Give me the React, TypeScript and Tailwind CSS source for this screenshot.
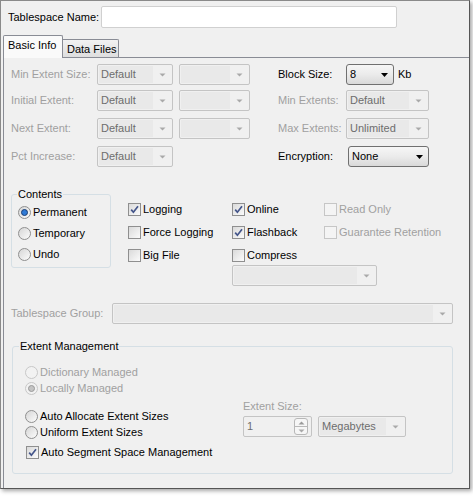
import React from "react";

const dim = "text-[#a0a0a0]";

function Tri({ dark }: { dark?: boolean }) {
  return dark ? (
    <svg width="7" height="4" viewBox="0 0 7 4" className="shrink-0">
      <path d="M0 0H7L3.5 4Z" fill="#000" />
    </svg>
  ) : (
    <svg width="7" height="4" viewBox="0 0 7 4" className="shrink-0">
      <path d="M0.5 0.5H6.5L3.5 3.5Z" fill="#a9a9a9" />
    </svg>
  );
}

function DCombo({ w, text, className = "" }: { w: string; text?: string; className?: string }) {
  return (
    <div className={`${w} ${className} h-[21px] shrink-0 flex items-center border border-[#c4c4c4] rounded-[2px] pl-[1px]`}>
      <div className="flex-1 h-[17px] flex items-center bg-[#e9e9e9] pl-[2px] text-[#6d6d6d]">{text}</div>
      <div className="w-[19px] flex justify-center">
        <Tri />
      </div>
    </div>
  );
}

function ECombo({ w, text, className = "" }: { w: string; text: string; className?: string }) {
  return (
    <div
      className={`${w} ${className} h-[21px] shrink-0 flex items-center justify-between border border-[#707070] rounded-[3px] bg-gradient-to-b from-[#f6f6f6] via-[#ebebeb] to-[#d9d9d9] pl-[3px] pr-[5px]`}
    >
      <span>{text}</span>
      <Tri dark />
    </div>
  );
}

function Check({ checked, disabled }: { checked?: boolean; disabled?: boolean }) {
  return (
    <span
      className={`w-[13px] h-[13px] shrink-0 flex items-center justify-center border ${
        disabled ? "border-[#c6c6c6] bg-[#f4f4f4]" : "border-[#8f8f8f] bg-gradient-to-br from-[#dadada] to-[#fbfbfb]"
      }`}
    >
      {checked && (
        <svg width="9" height="9" viewBox="0 0 9 9">
          <path d="M1.2 4.6L3.4 7.2L8 1.2" stroke="#44558a" strokeWidth="1.7" fill="none" />
        </svg>
      )}
    </span>
  );
}

function Radio({ checked, disabled }: { checked?: boolean; disabled?: boolean }) {
  return (
    <span
      className={`w-[13px] h-[13px] shrink-0 rounded-full flex items-center justify-center border ${
        disabled ? "border-[#c8c8c8] bg-[#f2f2f2]" : "border-[#8f8f8f] bg-gradient-to-br from-[#d6d6d6] to-[#fcfcfc]"
      }`}
    >
      {checked && (
        <span
          className={`w-[7px] h-[7px] rounded-full border ${
            disabled ? "border-[#9a9a9a] bg-[#c4c4c4]" : "border-[#1c3e73] bg-[#2f7ad6]"
          }`}
        />
      )}
    </span>
  );
}

function CheckRow({ label, checked, disabled }: { label: string; checked?: boolean; disabled?: boolean }) {
  return (
    <div className="flex items-center h-[16px] gap-[2px]">
      <Check checked={checked} disabled={disabled} />
      <span className={disabled ? dim : ""}>{label}</span>
    </div>
  );
}

function RadioRow({ label, checked, disabled }: { label: string; checked?: boolean; disabled?: boolean }) {
  return (
    <div className="flex items-center h-[16px] gap-[2px]">
      <Radio checked={checked} disabled={disabled} />
      <span className={disabled ? dim : ""}>{label}</span>
    </div>
  );
}

export default function App() {
  return (
    <div className="w-[473px] h-[499px] bg-white font-['Liberation_Sans',Arial,sans-serif] text-[11px] leading-[13px] text-black">
      <div className="w-[470px] h-[489px] flex flex-col bg-[#f0f0f0] border border-[#8a8a8a] border-r-[#555] border-b-[#555] shadow-[2px_2px_4px_rgba(0,0,0,0.35)]">
        {/* name */}
        <div className="flex items-center pl-[7px] pt-[5px]">
          <span className="w-[93px]">Tablespace Name:</span>
          <div className="w-[296px] h-[22px] bg-white border border-[#d0d0d0] rounded-[2px]" />
        </div>

        {/* tabs */}
        <div className="flex items-end pl-[2px] mt-[7px]">
          <div className="relative z-10 -mb-px w-[60px] h-[23px] pl-[4px] pt-[3px] bg-[#fafafa] border border-b-0 border-[#898c95] rounded-t-[2px]">
            Basic Info
          </div>
          <div className="w-[56px] h-[18px] pl-[4px] pt-[3px] bg-gradient-to-b from-[#f2f2f2] to-[#dedede] border border-l-0 border-b-0 border-[#898c95] rounded-tr-[2px]">
            Data Files
          </div>
        </div>

        {/* panel */}
        <div className="flex-1 ml-[2px] pl-[7px] pt-[6px] border-t border-l border-[#898c95]">
          <div className="flex items-center h-[21px]">
            <span className={`w-[86px] ${dim}`}>Min Extent Size:</span>
            <DCombo w="w-[76px]" text="Default" />
            <DCombo w="w-[71px]" className="ml-[6px]" />
            <span className="ml-[28px] w-[68px]">Block Size:</span>
            <ECombo w="w-[48px]" text="8" />
            <span className="ml-[4px]">Kb</span>
          </div>
          <div className="flex items-center h-[21px] mt-[5px]">
            <span className={`w-[86px] ${dim}`}>Initial Extent:</span>
            <DCombo w="w-[76px]" text="Default" />
            <DCombo w="w-[71px]" className="ml-[6px]" />
            <span className={`ml-[28px] w-[68px] ${dim}`}>Min Extents:</span>
            <DCombo w="w-[83px]" text="Default" />
          </div>
          <div className="flex items-center h-[21px] mt-[7px]">
            <span className={`w-[86px] ${dim}`}>Next Extent:</span>
            <DCombo w="w-[76px]" text="Default" />
            <DCombo w="w-[71px]" className="ml-[6px]" />
            <span className={`ml-[28px] w-[68px] ${dim}`}>Max Extents:</span>
            <DCombo w="w-[83px]" text="Unlimited" />
          </div>
          <div className="flex items-center h-[21px] mt-[7px]">
            <span className={`w-[86px] ${dim}`}>Pct Increase:</span>
            <DCombo w="w-[76px]" text="Default" />
            <span className="ml-[105px] w-[70px]">Encryption:</span>
            <ECombo w="w-[81px]" text="None" />
          </div>

          {/* contents + flags */}
          <div className="flex items-start mt-[21px]">
            <fieldset className="w-[100px] border border-[#d5dfe5] rounded-[3px] pl-[5px] pb-[5px]">
              <legend className="px-[1px] leading-[13px]">Contents</legend>
              <div className="flex flex-col gap-[5px] mt-[3px] ml-[1px]">
                <RadioRow label="Permanent" checked />
                <RadioRow label="Temporary" />
                <RadioRow label="Undo" />
              </div>
            </fieldset>
            <div className="ml-[17px] mt-[13px] grid grid-cols-[104px_92px_auto] gap-y-[7px]">
              <CheckRow label="Logging" checked />
              <CheckRow label="Online" checked />
              <CheckRow label="Read Only" disabled />
              <CheckRow label="Force Logging" />
              <CheckRow label="Flashback" checked />
              <CheckRow label="Guarantee Retention" disabled />
              <CheckRow label="Big File" />
              <CheckRow label="Compress" />
              <div />
              <DCombo w="w-[145px]" className="col-start-2 col-span-2 -mt-[5px]" />
            </div>
          </div>

          {/* group */}
          <div className="flex items-center h-[21px] mt-[17px]">
            <span className={`w-[101px] ${dim}`}>Tablespace Group:</span>
            <DCombo w="w-[341px]" />
          </div>

          {/* extent management */}
          <fieldset className="w-[441px] ml-[1px] mt-[16px] border border-[#d5dfe5] rounded-[3px] pl-[6px] pb-[13px]">
            <legend className="px-[1px] leading-[13px]">Extent Management</legend>
            <div className="flex ml-[6px]">
              <div className="w-[217px] mt-[11px] flex flex-col">
                <RadioRow label="Dictionary Managed" disabled />
                <RadioRow label="Locally Managed" checked disabled />
                <div className="mt-[12px]">
                  <RadioRow label="Auto Allocate Extent Sizes" />
                </div>
                <RadioRow label="Uniform Extent Sizes" />
                <div className="mt-[4px] ml-[1px]">
                  <CheckRow label="Auto Segment Space Management" checked />
                </div>
              </div>
              <div className="mt-[47px]">
                <div className={`pl-[1px] ${dim}`}>Extent Size:</div>
                <div className="flex mt-[3px] ml-[1px]">
                  <div className="w-[69px] h-[21px] flex items-center justify-between border border-[#c4c4c4] rounded-[2px] pl-[3px] pr-[3px] text-[#6d6d6d]">
                    <span>1</span>
                    <div className="w-[14px] h-[17px] flex flex-col border border-[#b8b8b8] rounded-[3px] bg-[#f6f6f6]">
                      <div className="flex-1 flex items-center justify-center border-b border-[#b8b8b8]">
                        <svg width="7" height="4" viewBox="0 0 7 4">
                          <path d="M0.5 3.5H6.5L3.5 0.5Z" fill="#9a9a9a" />
                        </svg>
                      </div>
                      <div className="flex-1 flex items-center justify-center">
                        <Tri />
                      </div>
                    </div>
                  </div>
                  <DCombo w="w-[88px]" text="Megabytes" className="ml-[6px]" />
                </div>
              </div>
            </div>
          </fieldset>
        </div>
      </div>
    </div>
  );
}
